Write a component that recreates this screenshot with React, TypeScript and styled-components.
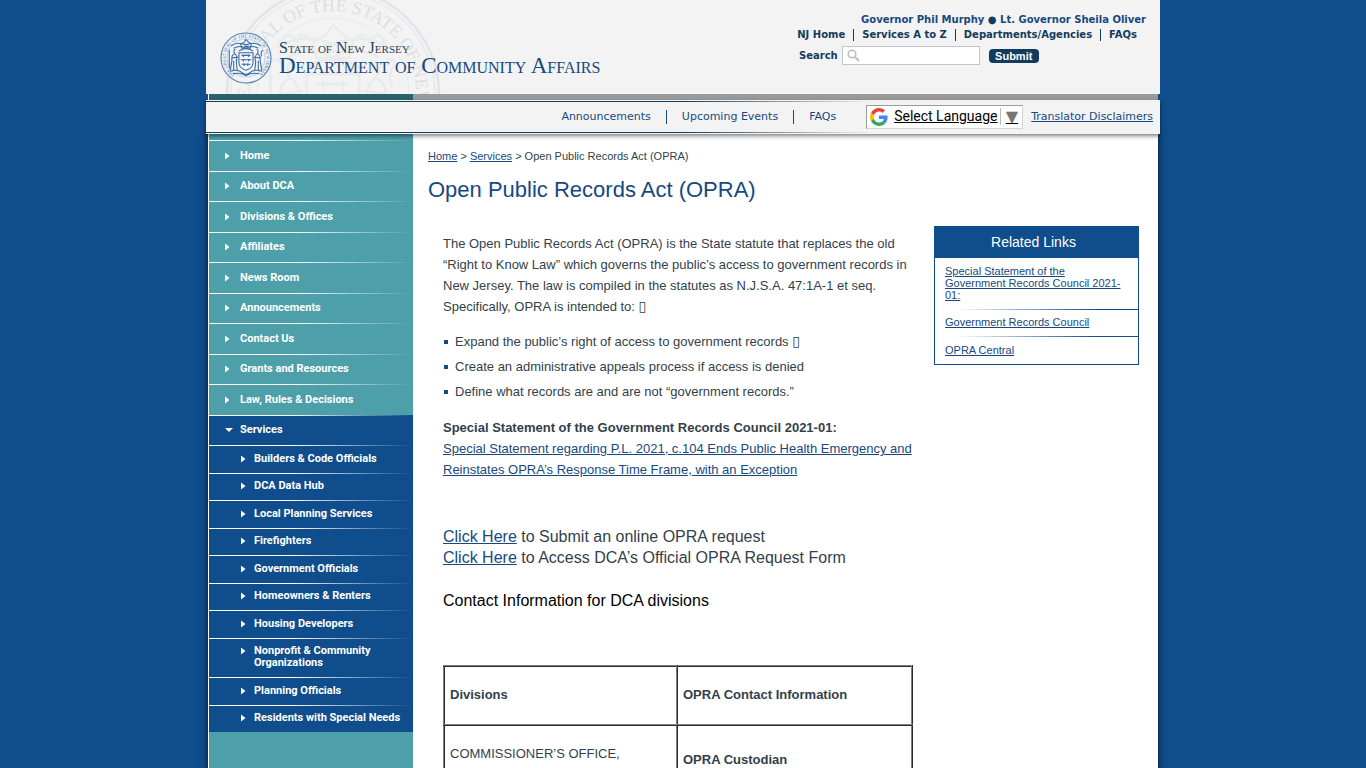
import React from 'react';
import styled, { createGlobalStyle, css } from 'styled-components';

const navy = '#133b5c';
const blue = '#0f4d8c';
const link = '#17497f';
const teal = '#4da0a9';
const arial = '"Liberation Sans", Arial, sans-serif';
const verdana = 'Verdana, "DejaVu Sans", sans-serif';

const GlobalStyle = createGlobalStyle`
  * { box-sizing: border-box; }
  body {
    margin: 0;
    background: ${blue};
    color: #333f4a;
    font-family: ${arial};
    font-size: 13px;
    line-height: 21px;
  }
  ul, p, h1, h2 { margin: 0; padding: 0; }
  ul { list-style: none; }
  a { color: ${link}; }
`;

const Page = styled.div`
  display: flex;
  flex-direction: column;
  width: 100%;
  max-width: 954px;
  min-height: 100vh;
  margin: 0 auto;
`;

const Header = styled.header`
  position: relative;
  z-index: 2;
  display: flex;
  justify-content: space-between;
  height: 94px;
  overflow: hidden;
  background: #f3f3f3;
`;

const Watermark = styled.svg`
  position: absolute;
  left: 15px;
  top: 0;
`;

const Brand = styled.a`
  position: relative;
  display: flex;
  gap: 7px;
  padding: 32px 0 0 14px;
  text-decoration: none;
`;

const BrandText = styled.span`
  display: flex;
  flex-direction: column;
  padding-top: 7px;
  font-family: "Liberation Serif", "Times New Roman", serif;
  font-variant: small-caps;
  white-space: nowrap;
`;

const StateName = styled.span`
  color: #2a4258;
  font-size: 16px;
  line-height: 18px;
`;

const DepartmentName = styled.span`
  color: ${link};
  font-size: 23px;
  line-height: 18px;
`;

const Utility = styled.div`
  position: relative;
  padding: 12px 14px 0 0;
  color: ${navy};
  font: bold 10px/15px ${verdana};
`;

const Governors = styled.p`
  text-align: right;
  a { color: ${link}; text-decoration: none; }
`;

const UtilityLinks = styled.ul`
  display: flex;
  justify-content: flex-end;
  padding-right: 9px;
`;

const UtilityItem = styled.li`
  display: flex;
  align-items: center;
  & + &::before {
    content: '';
    width: 1px;
    height: 12px;
    margin: 0 8px;
    background: ${navy};
  }
  a { color: ${navy}; text-decoration: none; }
`;

const SearchForm = styled.form`
  display: flex;
  align-items: center;
  width: 347px;
  margin: 4px 0 0 auto;
`;

const SearchField = styled.span`
  display: flex;
  align-items: center;
  gap: 4px;
  width: 138px;
  height: 19px;
  margin: 0 9px 0 4px;
  padding-left: 4px;
  border: 1px solid #c2c6cc;
  background: #fff;
  input {
    width: 110px;
    padding: 0;
    border: 0;
    outline: 0;
    font: 11px ${arial};
  }
`;

const SubmitButton = styled.button`
  width: 50px;
  height: 14px;
  padding: 0;
  border: 0;
  border-radius: 4px;
  background: ${navy};
  color: #fff;
  font: bold 11px/14px ${arial};
`;

const Strip = styled.div`
  height: 6px;
  margin: 0 2px;
  border-left: 1px solid #fff;
  background: linear-gradient(to right, #2a636a 204px, #9b9b9b 204px);
`;

const NavBar = styled.nav`
  position: relative;
  z-index: 2;
  display: flex;
  justify-content: flex-end;
  align-items: center;
  height: 34px;
  padding: 0 7px 1px 0;
  background:
    linear-gradient(to right, ${navy} 50%, transparent 70%) 0 1px / 100% 1px no-repeat,
    linear-gradient(to right, ${navy} 50%, transparent 70%) 0 32px / 100% 1px no-repeat,
    #f3f3f3;
  box-shadow: 0 2px 4px rgba(0, 0, 0, 0.5);
  font: 11px/15px ${verdana};
`;

const NavList = styled.ul`
  display: flex;
`;

const NavItem = styled.li`
  display: flex;
  align-items: center;
  & + &::before {
    content: '';
    width: 1px;
    height: 14px;
    margin: 0 15px;
    background: ${link};
  }
  a { text-decoration: none; }
`;

const Translate = styled.button`
  display: flex;
  align-items: center;
  width: 157px;
  height: 24px;
  margin: 0 8px 0 30px;
  padding: 0 4px 0 3px;
  border: 1px solid #d5d5d5;
  border-top-color: #9b9b9b;
  border-left-color: #9b9b9b;
  background: #fff;
  color: #000;
  font: 14px/17px Roboto, ${arial};
`;

const TranslateLabel = styled.span`
  flex: 1;
  margin-left: 6px;
  text-align: left;
  text-decoration: underline;
  white-space: nowrap;
`;

const TranslateArrow = styled.span`
  padding-left: 5px;
  border-left: 1px solid #bbb;
  color: #767676;
  font-family: "DejaVu Sans", sans-serif;
  font-size: 16px;
  text-decoration: underline #000;
`;

const Columns = styled.div`
  display: flex;
  flex: 1;
  margin: 0 2px;
  border-left: 1px solid #fff;
  background: #fff;
  box-shadow: 0 0 6px 1px rgba(0, 0, 0, 0.6);
`;

const Sidebar = styled.nav`
  flex: none;
  width: 204px;
  padding-top: 6px;
  background: ${teal};
  font-family: Roboto, ${arial};
  font-size: 11px;
  font-weight: bold;
  line-height: 12px;
  a { color: #fff; text-decoration: none; }
`;

const rule = css`
  background-image: linear-gradient(to right, #fff 40%, transparent);
  background-size: 100% 1px;
  background-repeat: no-repeat;
`;

const SideItem = styled.li<{ $open?: boolean }>`
  ${rule}
  background-color: ${(p) => (p.$open ? blue : 'transparent')};
`;

const SideLink = styled.a`
  display: flex;
  align-items: center;
  height: 30px;
  padding: 0 12px 0 15px;
  li:nth-child(odd) > & { height: 31px; }
`;

const SubItem = styled.li`
  ${rule}
`;

const SubLink = styled.a`
  display: flex;
  padding: 8px 4px 8px 31px;
  li:nth-child(even) > & { padding-top: 7px; }
`;

const MarkerBox = styled.span<{ $sub?: boolean }>`
  display: flex;
  flex: none;
  align-items: center;
  width: ${(p) => (p.$sub ? 14 : 16)}px;
  height: 12px;
  padding-left: 1px;
`;

const Main = styled.main`
  flex: 1;
  min-width: 0;
  padding: 14px 19px 20px 15px;
`;

const Breadcrumb = styled.nav`
  font-size: 11px;
  line-height: 16px;
`;

const Title = styled.h1`
  margin-top: 12px;
  color: ${link};
  font-size: 22px;
  font-weight: normal;
  line-height: 28px;
`;

const Body = styled.div`
  display: flex;
  align-items: flex-start;
  gap: 21px;
  padding-left: 15px;
  margin-top: 22px;
`;

const Article = styled.article`
  flex: 1;
  min-width: 0;
  padding-top: 7px;
`;

const Bullets = styled.ul`
  margin: 12px 0 13px;
  line-height: 25px;
`;

const Bullet = styled.li`
  display: flex;
  align-items: center;
  gap: 7px;
  &::before {
    content: '';
    width: 4px;
    height: 4px;
    margin-left: 1px;
    background: ${link};
  }
`;

const Glyph = styled.span`
  font-family: "DejaVu Sans", sans-serif;
  font-size: 14px;
  line-height: 1;
`;

const Requests = styled.p`
  margin-top: 46px;
  font-size: 16px;
  line-height: 21px;
`;

const ContactTitle = styled.h2`
  margin: 22px 0 54px;
  color: #000;
  font-size: 16px;
  font-weight: normal;
  line-height: 21px;
`;

const Table = styled.table`
  width: 100%;
  border: 2px ridge #808080;
  border-collapse: collapse;
  table-layout: fixed;
  th, td {
    height: 59px;
    padding: 0 5px 2px;
    border: 2px ridge #808080;
    text-align: left;
  }
  th:first-child { width: 233px; }
  td { height: 70px; font-weight: bold; }
  td:first-child {
    padding-top: 17px;
    font-weight: normal;
    vertical-align: top;
  }
`;

const Related = styled.aside`
  flex: none;
  width: 205px;
  border: 1px solid ${blue};
  font-size: 11px;
  line-height: 12px;
`;

const RelatedTitle = styled.h2`
  padding-right: 6px;
  background: ${blue};
  color: #fff;
  font-size: 14px;
  font-weight: normal;
  line-height: 31px;
  text-align: center;
`;

const RelatedItem = styled.li`
  padding: 7px 14px 8px 10px;
  & + & {
    background: linear-gradient(to right, transparent 10%, ${blue} 80%) 0 0 / 100% 1px no-repeat;
  }
  &:last-child { padding-top: 8px; }
`;

const RightMark = ({ sub }: { sub?: boolean }) => (
  <MarkerBox $sub={sub}>
    <svg width="5" height="8" viewBox="0 0 5 8" aria-hidden="true">
      <path d="M0 0.5 L4.5 4 L0 7.5Z" fill="#fff" />
    </svg>
  </MarkerBox>
);

const DownMark = () => (
  <MarkerBox>
    <svg width="8" height="4" viewBox="0 0 8 4" aria-hidden="true">
      <path d="M0 0 H8 L4 4Z" fill="#fff" />
    </svg>
  </MarkerBox>
);

const SealArt = () => (
  <>
    <path d="M-17 -14 Q-9 -19 0 -15 Q9 -19 17 -14 M-14 -11 Q-7 -15 0 -11 Q7 -15 14 -11 M-8 -8 Q0 -13 8 -8" />
    <path d="M-5 -11 L-6 -16 L-2 -18 L0 -21 L3 -18 L6 -16 L5 -11Z M-3 -15 H3 M-2 -13 H3" />
    <path d="M-8 -6 H8 V6 Q7 12 0 14 Q-7 12 -8 6Z" />
    <path d="M-5 -3 H5 M-6 2 H6 M-5 7 H5 M-3 -4 V-1 M3 -4 V-1 M-3 1 V4 M3 1 V4 M-2 6 V9 M2 6 V9" />
    <path d="M-12 -10 Q-15 -9 -13 -5 Q-17 -3 -16 3 L-18 14 M-13 -5 Q-9 -2 -11 4 L-10 14 M-14 3 V14 M-16 0 L-9 -1 M-19 -9 V12" />
    <path d="M12 -10 Q15 -9 13 -5 Q17 -3 16 3 L18 14 M13 -5 Q9 -2 11 4 L10 14 M14 3 V14 M16 0 L9 -1 M19 -9 Q16 -6 18 -2" />
    <path d="M-18 15 Q-9 12 -4 17 Q0 20 4 17 Q9 12 18 15 M-15 18 Q-7 16 0 20 Q7 16 15 18" />
  </>
);

const HeaderWatermark = () => (
  <Watermark width="226" height="94" viewBox="0 0 226 94" aria-hidden="true">
    <g fill="none" stroke="#e2e4e7">
      <circle cx="112" cy="94" r="106" strokeWidth="2.5" />
      <circle cx="112" cy="94" r="102" strokeWidth="1" />
      <circle cx="112" cy="94" r="76" strokeWidth="0.6" />
      <g transform="translate(112 94) scale(3.3)" strokeWidth="0.8" stroke="#e9ebed">
        <SealArt />
        <path d="M-16 -15 Q-14 -20 -11 -16 Q-9 -20 -7 -16 M16 -15 Q14 -20 11 -16 Q9 -20 7 -16 M-20 -8 Q-17 -13 -15 -8 M20 -8 Q17 -13 15 -8" />
      </g>
    </g>
    <path id="bigArc" d="M112 177 A83 83 0 1 1 112.1 177" fill="none" />
    <text fill="#dddfe2" fontFamily="Liberation Serif" fontSize="18">
      <textPath href="#bigArc" startOffset="61">THE GREAT SEAL OF THE STATE OF NEW JERSEY</textPath>
    </text>
  </Watermark>
);

const Seal = () => (
  <svg width="52" height="52" viewBox="-26 -26 52 52" aria-hidden="true">
    <circle r="25" fill="#f0f3f7" stroke="#5f86b4" strokeWidth="1.2" />
    <circle r="19" fill="none" stroke="#9fb6d1" strokeWidth="0.6" />
    <path id="smallArc" d="M0 20.5 A20.5 20.5 0 1 1 0.1 20.5" fill="none" />
    <text fill="#4b78ac" fontFamily="Liberation Serif" fontSize="4.5">
      <textPath href="#smallArc" startOffset="12">THE GREAT SEAL OF THE STATE OF NEW JERSEY</textPath>
    </text>
    <g fill="none" stroke="#39699f" strokeWidth="1.2" transform="scale(0.88)">
      <SealArt />
    </g>
  </svg>
);

const GoogleMark = () => (
  <svg width="18" height="18" viewBox="0 0 48 48" aria-hidden="true">
    <path fill="#EA4335" d="M24 9.5c3.54 0 6.71 1.22 9.21 3.6l6.85-6.85C35.9 2.38 30.47 0 24 0 14.62 0 6.51 5.38 2.56 13.22l7.98 6.19C12.43 13.72 17.74 9.5 24 9.5z" />
    <path fill="#4285F4" d="M46.98 24.55c0-1.57-.15-3.09-.38-4.55H24v9.02h12.94c-.58 2.96-2.26 5.48-4.78 7.18l7.73 6c4.51-4.18 7.09-10.36 7.09-17.65z" />
    <path fill="#FBBC05" d="M10.53 28.59c-.48-1.45-.76-2.99-.76-4.59s.27-3.14.76-4.59l-7.98-6.19C.92 16.46 0 20.12 0 24c0 3.88.92 7.54 2.56 10.78l7.97-6.19z" />
    <path fill="#34A853" d="M24 48c6.48 0 11.93-2.13 15.89-5.81l-7.73-6c-2.15 1.45-4.92 2.3-8.16 2.3-6.26 0-11.57-4.22-13.47-9.91l-7.98 6.19C6.51 42.62 14.62 48 24 48z" />
  </svg>
);

const sections = ['Home', 'About DCA', 'Divisions & Offices', 'Affiliates', 'News Room', 'Announcements', 'Contact Us', 'Grants and Resources', 'Law, Rules & Decisions'];
const services = ['Builders & Code Officials', 'DCA Data Hub', 'Local Planning Services', 'Firefighters', 'Government Officials', 'Homeowners & Renters', 'Housing Developers', 'Nonprofit & Community Organizations', 'Planning Officials', 'Residents with Special Needs'];
const related = ['Special Statement of the Government Records Council 2021-01:', 'Government Records Council', 'OPRA Central'];

export default function App() {
  return (
    <>
      <GlobalStyle />
      <Page>
        <Header>
          <HeaderWatermark />
          <Brand href="#">
            <Seal />
            <BrandText>
              <StateName>State of New Jersey</StateName>
              <DepartmentName>Department of Community Affairs</DepartmentName>
            </BrandText>
          </Brand>
          <Utility>
            <Governors>
              <a href="#">Governor Phil Murphy</a> ● <a href="#">Lt. Governor Sheila Oliver</a>
            </Governors>
            <UtilityLinks>
              {['NJ Home', 'Services A to Z', 'Departments/Agencies', 'FAQs'].map((t) => (
                <UtilityItem key={t}><a href="#">{t}</a></UtilityItem>
              ))}
            </UtilityLinks>
            <SearchForm onSubmit={(e) => e.preventDefault()}>
              <label htmlFor="search">Search</label>
              <SearchField>
                <svg width="13" height="13" viewBox="0 0 13 13" aria-hidden="true">
                  <circle cx="5" cy="5" r="3.8" fill="none" stroke="#bdbdbd" strokeWidth="1.5" />
                  <path d="M8 8 L12 12" stroke="#bdbdbd" strokeWidth="2" />
                </svg>
                <input id="search" type="text" />
              </SearchField>
              <SubmitButton type="submit">Submit</SubmitButton>
            </SearchForm>
          </Utility>
        </Header>
        <Strip />
        <NavBar aria-label="Quick links">
          <NavList>
            {['Announcements', 'Upcoming Events', 'FAQs'].map((t) => (
              <NavItem key={t}><a href="#">{t}</a></NavItem>
            ))}
          </NavList>
          <Translate type="button">
            <GoogleMark />
            <TranslateLabel>Select Language</TranslateLabel>
            <TranslateArrow>▼</TranslateArrow>
          </Translate>
          <a href="#">Translator Disclaimers</a>
        </NavBar>
        <Columns>
          <Sidebar aria-label="Sections">
            <ul>
              {sections.map((t) => (
                <SideItem key={t}><SideLink href="#"><RightMark />{t}</SideLink></SideItem>
              ))}
              <SideItem $open>
                <SideLink href="#"><DownMark />Services</SideLink>
                <ul>
                  {services.map((t) => (
                    <SubItem key={t}><SubLink href="#"><RightMark sub />{t}</SubLink></SubItem>
                  ))}
                </ul>
              </SideItem>
            </ul>
          </Sidebar>
          <Main>
            <Breadcrumb aria-label="Breadcrumb">
              <a href="#">Home</a> &gt; <a href="#">Services</a> &gt; Open Public Records Act (OPRA)
            </Breadcrumb>
            <Title>Open Public Records Act (OPRA)</Title>
            <Body>
              <Article>
                <p>
                  The Open Public Records Act (OPRA) is the State statute that replaces the old “Right to Know Law” which governs the public’s access to government records in New Jersey. The law is compiled in the statutes as N.J.S.A. 47:1A-1 et seq. Specifically, OPRA is intended to: <Glyph>▯</Glyph>
                </p>
                <Bullets>
                  <Bullet><span>Expand the public’s right of access to government records <Glyph>▯</Glyph></span></Bullet>
                  <Bullet>Create an administrative appeals process if access is denied</Bullet>
                  <Bullet>Define what records are and are not “government records.”</Bullet>
                </Bullets>
                <p>
                  <strong>Special Statement of the Government Records Council 2021-01:</strong>
                  <br />
                  <a href="#">Special Statement regarding P.L. 2021, c.104 Ends Public Health Emergency and Reinstates OPRA’s Response Time Frame, with an Exception</a>
                </p>
                <Requests>
                  <a href="#">Click Here</a> to Submit an online OPRA request
                  <br />
                  <a href="#">Click Here</a> to Access DCA’s Official OPRA Request Form
                </Requests>
                <ContactTitle>Contact Information for DCA divisions</ContactTitle>
                <Table>
                  <thead>
                    <tr><th>Divisions</th><th>OPRA Contact Information</th></tr>
                  </thead>
                  <tbody>
                    <tr><td>COMMISSIONER’S OFFICE,</td><td>OPRA Custodian</td></tr>
                  </tbody>
                </Table>
              </Article>
              <Related>
                <RelatedTitle>Related Links</RelatedTitle>
                <ul>
                  {related.map((t) => (
                    <RelatedItem key={t}><a href="#">{t}</a></RelatedItem>
                  ))}
                </ul>
              </Related>
            </Body>
          </Main>
        </Columns>
      </Page>
    </>
  );
}
